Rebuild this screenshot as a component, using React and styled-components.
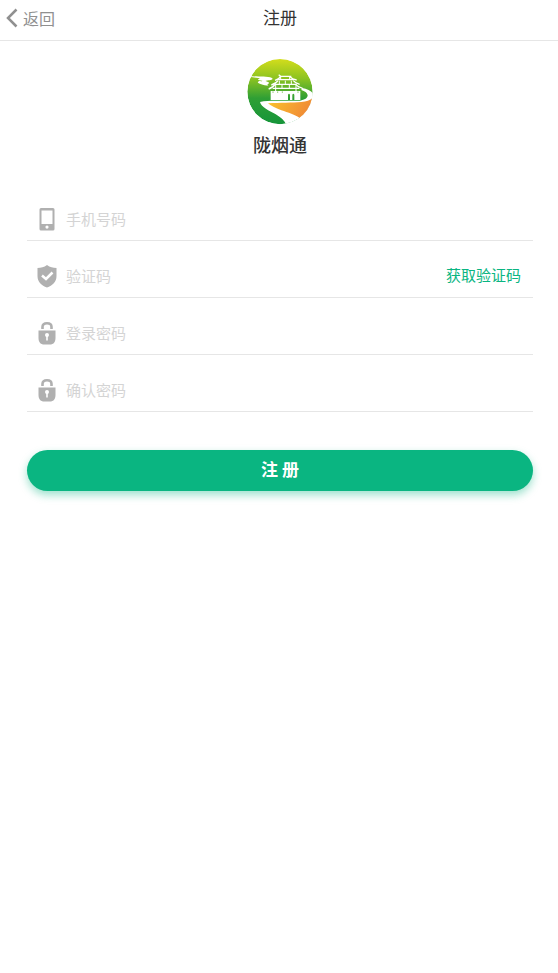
import React, { useState } from "react";
import styled, { createGlobalStyle } from "styled-components";

function Logo() {
  return (
    <LogoImage viewBox="21 21 198 198" role="img" aria-label="陇烟通">
      <defs>
        <linearGradient id="sky" x1="0" y1="0" x2="0" y2="1">
          <stop offset="0" stopColor="#d3dd1c" />
          <stop offset="0.3" stopColor="#8cc321" />
          <stop offset="0.6" stopColor="#2f9f35" />
          <stop offset="1" stopColor="#15953a" />
        </linearGradient>
        <linearGradient id="field" x1="0" y1="0" x2="1" y2="0.3">
          <stop offset="0" stopColor="#fbc52d" />
          <stop offset="1" stopColor="#f08a35" />
        </linearGradient>
        <clipPath id="round">
          <circle cx="120" cy="119" r="98" />
        </clipPath>
      </defs>
      <g clipPath="url(#round)">
        <circle cx="120" cy="119" r="98" fill="url(#sky)" />
        <path
          d="M60 150 C74 146 90 146 108 146 H180 C194 144 203 138 203 130 C202 122 194 117 184 114 L186 108 C204 111 218 119 222 130 L220 220 H138 C136 206 122 196 106 186 C88 176 64 166 60 150 Z"
          fill="#fff"
        />
        <path
          d="M84 154 C120 152 158 152 184 150 C200 148 210 144 220 137 C218 162 204 182 179 198 C166 188 144 182 124 175 C106 168 92 161 84 154 Z"
          fill="url(#field)"
        />
        <path
          d="M26 71 C48 76 78 71 96 78 C102 82 92 85 78 86 C74 88 88 89 87 93 C86 97 78 97 86 101 C68 99 50 94 54 89 C58 86 70 88 66 86 C58 84 48 83 58 80 C64 78 48 77 26 75 Z"
          fill="#fff"
        />
        <path
          d="M92 117 H181 V144 H163 V128 Q160 122 157 128 V144 H150 V128 Q147 122 144 128 V144 H92 Z"
          fill="#fff"
        />
        <g fill="none" stroke="#fff" strokeWidth="4">
          <path d="M116 68 L122 73 H154 M122 73 Q118 81 105 85 M150 74 Q156 82 170 84 M112 83 H162" />
          <path d="M114 86 Q109 94 94 99 M160 86 Q166 94 179 97 M104 97 H170" />
          <path d="M104 98 Q100 106 86 111 M168 98 Q174 106 188 109 M98 109 H178" />
          <path
            d="M122 75 V82 M149 75 V82 M118 86 V96 M136 86 V96 M154 86 V96 M107 99 V118 M126 99 V108 M148 99 V108 M168 99 V118"
            strokeWidth="3"
          />
        </g>
        <path
          d="M99 118 V123 M113 118 V123 M127 118 V123 M174 118 V123"
          stroke="#63b43e"
          strokeWidth="2"
        />
      </g>
    </LogoImage>
  );
}

function PhoneIcon() {
  return (
    <FieldIcon viewBox="0 0 22 24" aria-hidden="true">
      <path
        fillRule="evenodd"
        d="M5 1 H17 Q18.500 1 18.500 2.500 V22 Q18.500 23.500 17 23.500 H5 Q3.500 23.500 3.500 22 V2.500 Q3.500 1 5 1 Z M5.500 3.500 V17 H16.500 V3.500 Z M11 18.500 A1.600 1.600 0 1 0 11 21.700 A1.600 1.600 0 1 0 11 18.500 Z"
      />
    </FieldIcon>
  );
}

function ShieldIcon() {
  return (
    <FieldIcon viewBox="0 0 22 24" aria-hidden="true">
      <path d="M11 1 C14 3.300 17 4 20.500 4 V12 C20.500 18 16.500 21.500 11 23.500 C5.500 21.500 1.500 18 1.500 12 V4 C5 4 8 3.300 11 1 Z" />
      <path d="M6 11.500 L10 15 L16.500 8.500" fill="none" stroke="#fff" strokeWidth="2.500" />
    </FieldIcon>
  );
}

function LockIcon() {
  return (
    <FieldIcon viewBox="0 0 22 24" aria-hidden="true">
      <path
        d="M6.500 8 V6 Q6.500 2.300 11 2.300 Q15.500 2.300 15.500 6 V8"
        fill="none"
        stroke="#b0b0b0"
        strokeWidth="2.600"
      />
      <path d="M2.500 9.500 H19.500 V17 C19.500 21.500 17 23.500 14 23.500 H8 C5 23.500 2.500 21.500 2.500 17 Z" />
      <circle cx="11" cy="14" r="2" fill="#fff" />
      <path d="M11 14 V19.500" stroke="#fff" strokeWidth="1.600" />
    </FieldIcon>
  );
}

const fields = [
  { name: "phone", label: "手机号码", type: "tel", Icon: PhoneIcon },
  { name: "code", label: "验证码", type: "text", Icon: ShieldIcon },
  { name: "password", label: "登录密码", type: "password", Icon: LockIcon },
  { name: "confirm", label: "确认密码", type: "password", Icon: LockIcon },
];

function App() {
  const [values, setValues] = useState({
    phone: "",
    code: "",
    password: "",
    confirm: "",
  });

  const handleChange = (e) => {
    setValues({ ...values, [e.target.name]: e.target.value });
  };

  const handleSubmit = (e) => {
    e.preventDefault();
  };

  return (
    <Page>
      <GlobalStyle />
      <Header>
        <BackLink href="#back">
          <BackArrow viewBox="0 0 12 20" aria-hidden="true">
            <path d="M10.500 1.500 L2 10 L10.500 18.500" />
          </BackArrow>
          返回
        </BackLink>
        <Title>注册</Title>
      </Header>
      <Content>
        <Brand>
          <Logo />
          <BrandName>陇烟通</BrandName>
        </Brand>
        <form onSubmit={handleSubmit}>
          {fields.map(({ name, label, type, Icon }) => (
            <Field key={name}>
              <FieldLabel htmlFor={name} aria-label={label}>
                <Icon />
              </FieldLabel>
              <Input
                id={name}
                name={name}
                type={type}
                placeholder={label}
                value={values[name]}
                onChange={handleChange}
              />
              {name === "code" && (
                <CodeButton type="button">获取验证码</CodeButton>
              )}
            </Field>
          ))}
          <SubmitButton type="submit">注 册</SubmitButton>
        </form>
      </Content>
    </Page>
  );
}

export default App;

const GlobalStyle = createGlobalStyle`
  * {
    box-sizing: border-box;
  }

  body {
    margin: 0;
    background: #fff;
    color: #333;
  }

  body, input, button {
    font-family: "Noto Sans CJK SC", sans-serif;
  }
`;

const Page = styled.div`
  min-height: 100vh;
  background: #fff;
`;

const Header = styled.header`
  display: grid;
  grid-template-columns: 1fr auto 1fr;
  align-items: center;
  height: 41px;
  padding: 0 4px 4px 6px;
  border-bottom: 1px solid #e6e6e6;
`;

const BackLink = styled.a`
  display: flex;
  align-items: center;
  gap: 5px;
  color: #909090;
  font-size: 16px;
  line-height: 22px;
  text-decoration: none;
`;

const BackArrow = styled.svg`
  width: 12px;
  height: 20px;
  fill: none;
  stroke: #909090;
  stroke-width: 2.5;
`;

const Title = styled.h1`
  margin: 0;
  padding-bottom: 2px;
  font-size: 17px;
  font-weight: 400;
  line-height: 24px;
`;

const Content = styled.main`
  padding: 18px 25px 0 27px;
`;

const Brand = styled.div`
  display: flex;
  flex-direction: column;
  align-items: center;
  gap: 7px;
  padding-bottom: 28px;
`;

const LogoImage = styled.svg`
  width: 66px;
  height: 66px;
`;

const BrandName = styled.p`
  margin: 0;
  font-size: 18px;
  font-weight: 500;
  line-height: 24px;
`;

const Field = styled.div`
  display: flex;
  align-items: center;
  height: 57px;
  padding: 14px 12px 0 9px;
  border-bottom: 1px solid #e6e6e6;
`;

const FieldLabel = styled.label`
  display: flex;
  margin-right: 8px;
`;

const FieldIcon = styled.svg`
  width: 22px;
  height: 24px;
  fill: #b0b0b0;
`;

const Input = styled.input`
  flex: 1;
  min-width: 0;
  height: 40px;
  padding: 0 0 2px;
  border: none;
  outline: none;
  background: transparent;
  color: #333;
  font-size: 15px;

  &::placeholder {
    color: #d4d4d4;
    opacity: 1;
  }
`;

const CodeButton = styled.button`
  padding: 0 0 2px;
  border: none;
  background: none;
  color: #0ab581;
  font-size: 15px;
  line-height: 24px;
  cursor: pointer;
`;

const SubmitButton = styled.button`
  display: block;
  width: 100%;
  height: 41px;
  margin-top: 38px;
  padding: 0 0 4px;
  border: none;
  border-radius: 21px;
  background: #0ab581;
  box-shadow: 0 4px 8px rgba(10, 181, 129, 0.4);
  color: #fff;
  font-size: 17px;
  font-weight: 700;
  line-height: 24px;
  cursor: pointer;
`;
